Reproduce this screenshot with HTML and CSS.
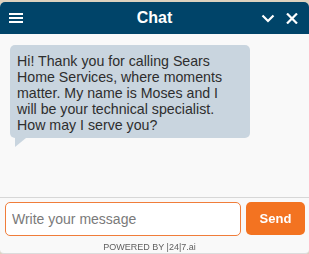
FILE: index.html
```html
<!DOCTYPE html>
<html lang="en">
<head>
<meta charset="utf-8">
<title>Chat</title>
<link rel="stylesheet" href="styles.css">
</head>
<body>
<div class="chat">
  <header class="header">
    <button class="icon-btn menu" aria-label="Menu">
      <svg width="14" height="10" viewBox="0 0 14 10"><rect x="0" y="0" width="14" height="2" fill="#fff"/><rect x="0" y="4" width="14" height="2" fill="#fff"/><rect x="0" y="8" width="14" height="2" fill="#fff"/></svg>
    </button>
    <h1 class="title">Chat</h1>
    <div class="actions">
      <button class="icon-btn" aria-label="Minimize">
        <svg width="14" height="9" viewBox="0 0 14 9"><path d="M1.5 1.5 L7 7 L12.5 1.5" fill="none" stroke="#fff" stroke-width="2.2"/></svg>
      </button>
      <button class="icon-btn" aria-label="Close">
        <svg width="12" height="11" viewBox="0 0 12 11"><path d="M1 0.5 L11 10.5 M11 0.5 L1 10.5" fill="none" stroke="#fff" stroke-width="2.2"/></svg>
      </button>
    </div>
  </header>
  <main class="messages">
    <div class="bubble">Hi! Thank you for calling Sears Home Services, where moments matter. My name is Moses and I will be your technical specialist. How may I serve you?</div>
  </main>
  <div class="composer">
    <input class="input" type="text" placeholder="Write your message" autofocus>
    <button class="send">Send</button>
  </div>
  <footer class="powered">POWERED BY |24|7.ai</footer>
</div>
</body>
</html>
```
FILE: styles.css
```css
* { box-sizing: border-box; }
html, body { margin: 0; padding: 0; }
body {
  width: 309px;
  height: 254px;
  overflow: hidden;
  background: #ddd2bf;
  font-family: "Liberation Sans", Arial, sans-serif;
}
.chat {
  margin-top: 2px;
  height: 252px;
  display: flex;
  flex-direction: column;
  background: #f9f9f9;
  border-radius: 5px 5px 4px 4px;
  border-bottom: 1px solid #dcdcdc;
  overflow: hidden;
}
.header {
  height: 32px;
  flex: none;
  background: #004469;
  display: grid;
  grid-template-columns: 1fr auto 1fr;
  align-items: center;
  padding: 0 11px 0 9px;
}
.icon-btn {
  background: none;
  border: 0;
  padding: 0;
  display: flex;
  cursor: pointer;
}
.menu { justify-self: start; }
.title {
  margin: 0;
  color: #fff;
  font-size: 16px;
  font-weight: bold;
  line-height: 32px;
  padding-left: 2px;
}
.actions {
  justify-self: end;
  display: flex;
  align-items: center;
  gap: 11px;
}
.messages {
  flex: 1;
  padding: 11px 0 0 10px;
}
.bubble {
  position: relative;
  width: 240px;
  padding: 8px 21px 5px 7px;
  background: #c9d5df;
  border-radius: 5px;
  color: #2e2e2e;
  font-size: 14.2px;
  line-height: 16px;
}
.bubble::after {
  content: "";
  position: absolute;
  left: 5px;
  top: 100%;
  width: 0;
  height: 0;
  border-top: 9px solid #c9d5df;
  border-right: 11px solid transparent;
}
.composer {
  flex: none;
  border-top: 1px solid #d7d7d7;
  padding: 4px 4px 0 5px;
  display: flex;
  align-items: flex-start;
  gap: 5px;
}
.input {
  flex: 1;
  min-width: 0;
  height: 34px;
  border: 1px solid #f07d3a;
  border-radius: 5px;
  background: #fff;
  padding: 0 6px;
  font-family: "Liberation Sans", Arial, sans-serif;
  font-size: 14px;
  color: #222;
  outline: none;
}
.input::placeholder { color: #7a7a7a; }
.send {
  flex: none;
  width: 59px;
  height: 33px;
  border: 0;
  border-radius: 5px;
  background: #f37321;
  color: #fff;
  font-family: "Liberation Sans", Arial, sans-serif;
  font-size: 13px;
  font-weight: bold;
  cursor: pointer;
}
.powered {
  flex: none;
  height: 17px;
  padding: 6px 10px 0 0;
  text-align: center;
  font-size: 9px;
  line-height: 11px;
  color: #606060;
}
```
